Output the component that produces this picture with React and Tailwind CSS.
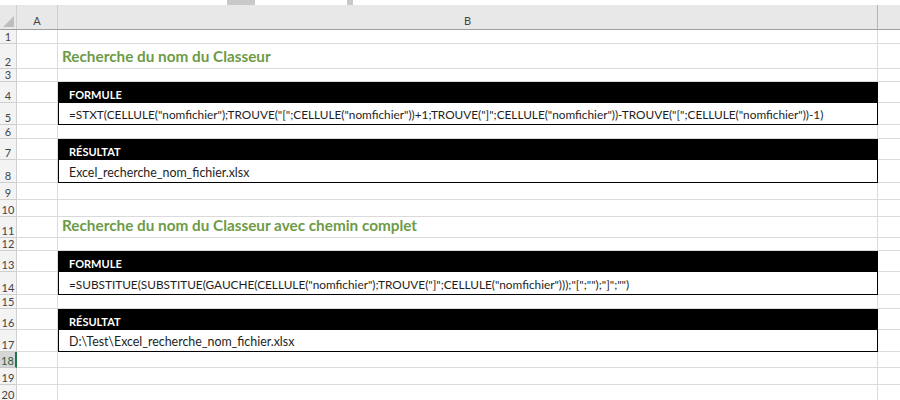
const font = { fontFamily: "Lato, 'Open Sans', sans-serif" };

const rows = [
  { n: 1, h: "h-[14px]" },
  { n: 2, h: "h-[25px]", kind: "title", text: "Recherche du nom du Classeur" },
  { n: 3, h: "h-[13px]" },
  { n: 4, h: "h-[21px]", kind: "bar", text: "FORMULE" },
  { n: 5, h: "h-[22px]", kind: "formula", text: '=STXT(CELLULE("nomfichier");TROUVE("[";CELLULE("nomfichier"))+1;TROUVE("]";CELLULE("nomfichier"))-TROUVE("[";CELLULE("nomfichier"))-1)' },
  { n: 6, h: "h-[14px]" },
  { n: 7, h: "h-[21px]", kind: "bar", text: "RÉSULTAT" },
  { n: 8, h: "h-[23px]", kind: "result", text: "Excel_recherche_nom_fichier.xlsx" },
  { n: 9, h: "h-[17px]" },
  { n: 10, h: "h-[17px]" },
  { n: 11, h: "h-[21px]", kind: "title", text: "Recherche du nom du Classeur avec chemin complet" },
  { n: 12, h: "h-[13px]" },
  { n: 13, h: "h-[21px]", kind: "bar", text: "FORMULE" },
  { n: 14, h: "h-[23px]", kind: "formula", text: '=SUBSTITUE(SUBSTITUE(GAUCHE(CELLULE("nomfichier");TROUVE("]";CELLULE("nomfichier")));"[";"");"]";"")' },
  { n: 15, h: "h-[14px]" },
  { n: 16, h: "h-[21px]", kind: "bar", text: "RÉSULTAT" },
  { n: 17, h: "h-[22px]", kind: "result", text: "D:\\Test\\Excel_recherche_nom_fichier.xlsx" },
  { n: 18, h: "h-[16px]", selected: true },
  { n: 19, h: "h-[17px]" },
  { n: 20, h: "h-[17px]" },
];

function CellB({ row }) {
  if (row.kind === "bar") {
    return (
      <div className="flex h-full w-[820px] shrink-0 items-end bg-black pb-[3px] pl-[11px] text-[11px] font-bold leading-none text-white">
        {row.text}
      </div>
    );
  }
  if (row.kind === "formula") {
    return (
      <div className="flex h-full w-[820px] shrink-0 items-end whitespace-nowrap border-x border-b border-black pb-[3px] pl-[10px] text-[11.8px] leading-none text-[#1e1e1e]">
        {row.text}
      </div>
    );
  }
  if (row.kind === "result") {
    return (
      <div className="flex h-full w-[820px] shrink-0 items-end whitespace-nowrap border-x border-b border-black pb-[3px] pl-[10px] text-[12.4px] leading-none text-[#1e1e1e]">
        {row.text}
      </div>
    );
  }
  if (row.kind === "title") {
    return (
      <div className="flex h-full w-[820px] shrink-0 items-end whitespace-nowrap border-b border-r border-[#dadada] pb-[4px] pl-[4px] text-[15.3px] font-bold leading-none text-[#6e9b46]">
        {row.text}
      </div>
    );
  }
  return <div className="h-full w-[820px] shrink-0 border-b border-r border-[#dadada]" />;
}

function SheetRow({ row }) {
  return (
    <div className={`flex ${row.h}`}>
      <div
        className={
          row.selected
            ? "flex w-[17px] shrink-0 items-end justify-center border-b border-r-2 border-b-[#c8c8c8] border-r-[#217346] bg-[#d6d6d6] pb-[1px] text-[11px] leading-none text-[#2e5e40]"
            : "flex w-[17px] shrink-0 items-end justify-center border-b border-r border-[#cfcfcf] bg-[#f3f3f3] pb-[1px] text-[11px] leading-none text-[#444]"
        }
      >
        {row.n}
      </div>
      <div className="h-full w-[41px] shrink-0 border-b border-r border-[#dadada]" />
      <CellB row={row} />
      <div className="h-full flex-1 border-b border-[#dadada]" />
    </div>
  );
}

export default function App() {
  return (
    <div className="h-[400px] w-[900px] overflow-hidden bg-white" style={font}>
      <div className="flex h-[5px] bg-[#c9c9c9]">
        <div className="w-[227px] bg-white" />
        <div className="w-[28px]" />
        <div className="w-[92px] bg-white" />
        <div className="w-[6px]" />
        <div className="flex-1 bg-white" />
      </div>
      <div className="flex h-[25px] border-b border-[#9f9f9f] bg-[#e8e8e8] text-[11px] text-[#444]">
        <div className="relative w-[17px] shrink-0 border-r border-[#cfcfcf]">
          <svg className="absolute bottom-[2px] right-[2px]" width="11" height="11" viewBox="0 0 11 11">
            <polygon points="11,0 11,11 0,11" fill="#bdbdbd" />
          </svg>
        </div>
        <div className="flex w-[41px] shrink-0 items-end justify-center border-r border-[#cfcfcf] pb-[3px] leading-none">A</div>
        <div className="flex w-[820px] shrink-0 items-end justify-center border-r border-[#b5b5b5] pb-[3px] leading-none">B</div>
        <div className="flex-1" />
      </div>
      {rows.map((row) => (
        <SheetRow key={row.n} row={row} />
      ))}
    </div>
  );
}
